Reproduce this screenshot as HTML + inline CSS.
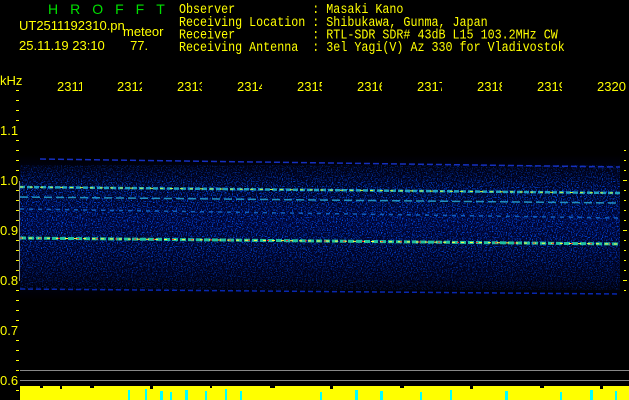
<!DOCTYPE html>
<html><head><meta charset="utf-8"><style>
html,body{margin:0;padding:0;background:#000;width:629px;height:400px;overflow:hidden;position:relative}
.t{position:absolute;font-family:"Liberation Mono",monospace;font-size:11.7px;color:#ffff00;white-space:pre;line-height:11px;transform-origin:0 0;transform:scaleY(1.15)}
.s{position:absolute;font-family:"Liberation Sans",sans-serif;color:#ffff00;font-size:13px;white-space:pre;line-height:13px}
.f{position:absolute;top:80px;width:25px;overflow:hidden;font-family:"Liberation Sans",sans-serif;font-size:13px;color:#ff0;line-height:13px}
</style></head><body>
<div class="s" style="left:48px;top:3px;color:#00e000;font-size:14px;letter-spacing:12px">HROFFT</div>
<div class="s" style="left:19px;top:19px">UT2511192310.pn</div>
<div class="s" style="left:123px;top:25px">meteor</div>
<div class="s" style="left:19px;top:39px">25.11.19 23:10       77.</div>
<div class="t" style="left:179px;top:4px">Observer           : Masaki Kano
Receiving Location : Shibukawa, Gunma, Japan
Receiver           : RTL-SDR SDR# 43dB L15 103.2MHz CW
Receiving Antenna  : 3el Yagi(V) Az 330 for Vladivostok</div>
<div class="s" style="left:0;top:74px">kHz</div>
<div class="f" style="left:57px">2311</div>
<div class="f" style="left:117px">2312</div>
<div class="f" style="left:177px">2313</div>
<div class="f" style="left:237px">2314</div>
<div class="f" style="left:297px">2315</div>
<div class="f" style="left:357px">2316</div>
<div class="f" style="left:417px">2317</div>
<div class="f" style="left:477px">2318</div>
<div class="f" style="left:537px">2319</div>
<div class="f" style="left:597px;width:30px">2320</div>
<div class="s" style="left:0;top:124px">1.1</div>
<div class="s" style="left:0;top:174px">1.0</div>
<div class="s" style="left:0;top:224px">0.9</div>
<div class="s" style="left:0;top:274px">0.8</div>
<div class="s" style="left:0;top:324px">0.7</div>
<div class="s" style="left:0;top:374px">0.6</div>
<svg width="629" height="400" style="position:absolute;left:0;top:0">
<defs>
<filter id="n" x="0" y="0" width="100%" height="100%">
<feTurbulence type="fractalNoise" baseFrequency="0.8" numOctaves="2" seed="3"/>
<feColorMatrix values="0 0 0 0 0  0.4 0 0 0 -0.2  4 0 0 0 -1.8  5 0 0 0 -2.4"/>
</filter>
<linearGradient id="g" x1="0" y1="0" x2="0" y2="1">
<stop offset="0" stop-color="#000"/><stop offset="0.1" stop-color="#000214"/>
<stop offset="0.45" stop-color="#000530"/><stop offset="0.85" stop-color="#000218"/><stop offset="1" stop-color="#000"/>
</linearGradient>
<linearGradient id="mg" x1="0" y1="0" x2="0" y2="1">
<stop offset="0" stop-color="#fff" stop-opacity="0.35"/><stop offset="0.2" stop-color="#fff" stop-opacity="0.9"/>
<stop offset="0.65" stop-color="#fff" stop-opacity="0.8"/><stop offset="1" stop-color="#fff" stop-opacity="0.3"/>
</linearGradient>
<mask id="m"><rect x="20" y="165" width="600" height="125" fill="url(#mg)"/></mask>
</defs>
<g fill="#ff0">
<rect x="16" y="90" width="3" height="1"/><rect x="16" y="100" width="3" height="1"/><rect x="16" y="110" width="3" height="1"/><rect x="16" y="120" width="3" height="1"/><rect x="16" y="140" width="3" height="1"/><rect x="16" y="150" width="3" height="1"/><rect x="16" y="160" width="3" height="1"/><rect x="16" y="170" width="3" height="1"/><rect x="16" y="190" width="3" height="1"/><rect x="16" y="200" width="3" height="1"/><rect x="16" y="210" width="3" height="1"/><rect x="16" y="220" width="3" height="1"/><rect x="16" y="240" width="3" height="1"/><rect x="16" y="250" width="3" height="1"/><rect x="16" y="260" width="3" height="1"/><rect x="16" y="270" width="3" height="1"/><rect x="16" y="290" width="3" height="1"/><rect x="16" y="300" width="3" height="1"/><rect x="16" y="310" width="3" height="1"/><rect x="16" y="320" width="3" height="1"/><rect x="16" y="340" width="3" height="1"/><rect x="16" y="350" width="3" height="1"/><rect x="16" y="360" width="3" height="1"/><rect x="16" y="370" width="3" height="1"/><rect x="16" y="390" width="3" height="1"/>
</g>
<g fill="#ff0">
<rect x="624" y="150" width="2" height="1"/><rect x="624" y="160" width="2" height="1"/><rect x="623" y="180" width="4" height="1"/><rect x="624" y="170" width="2" height="1"/><rect x="624" y="190" width="2" height="1"/><rect x="624" y="200" width="2" height="1"/><rect x="624" y="210" width="2" height="1"/><rect x="624" y="220" width="2" height="1"/><rect x="623" y="230" width="4" height="1"/><rect x="624" y="240" width="2" height="1"/><rect x="624" y="250" width="2" height="1"/><rect x="624" y="260" width="2" height="1"/><rect x="624" y="270" width="2" height="1"/><rect x="623" y="280" width="4" height="1"/><rect x="624" y="290" width="2" height="1"/>
</g>
<rect x="20" y="155" width="600" height="145" fill="url(#g)"/>
<g mask="url(#m)"><rect x="20" y="165" width="600" height="125" filter="url(#n)"/></g>
<g stroke-width="2" fill="none">
<line x1="40" y1="159" x2="620" y2="167" stroke="#1530c0" stroke-width="1.5" stroke-dasharray="6 3"/>
<line x1="20" y1="187" x2="620" y2="193" stroke="#20a0c0" stroke-width="2.5" stroke-dasharray="5 2"/>
<line x1="20" y1="187" x2="620" y2="193" stroke="#c0ff40" stroke-width="1" stroke-dasharray="3 7"/>
<line x1="20" y1="197" x2="620" y2="203" stroke="#2090c0" stroke-width="1.5" stroke-dasharray="8 4"/>
<line x1="20" y1="209" x2="620" y2="218" stroke="#1060c0" stroke-width="1.5" stroke-dasharray="4 5"/>
<line x1="20" y1="238" x2="620" y2="244" stroke="#20c0a0" stroke-width="3" stroke-dasharray="6 2"/>
<line x1="20" y1="238" x2="620" y2="244" stroke="#ffff40" stroke-width="1" stroke-dasharray="3 6"/>
<line x1="20" y1="238" x2="620" y2="244" stroke="#ff3020" stroke-width="1" stroke-dasharray="2 17"/>
<line x1="20" y1="289" x2="620" y2="294" stroke="#0828b0" stroke-width="1.5" stroke-dasharray="5 3"/>
</g>
<line x1="19.5" y1="181" x2="19.5" y2="281" stroke="#888"/>
<line x1="20" y1="370.5" x2="629" y2="370.5" stroke="#888"/>
<line x1="20" y1="380.5" x2="629" y2="380.5" stroke="#888"/>
<rect x="20" y="386" width="609" height="14" fill="#ffff00"/>
<g fill="#000">
<rect x="40" y="386" width="3" height="2"/><rect x="60" y="386" width="2" height="3"/><rect x="90" y="386" width="4" height="2"/><rect x="150" y="386" width="3" height="3"/><rect x="210" y="386" width="2" height="2"/><rect x="270" y="386" width="5" height="2"/><rect x="330" y="386" width="3" height="3"/><rect x="400" y="386" width="4" height="2"/><rect x="470" y="386" width="3" height="3"/><rect x="540" y="386" width="4" height="2"/><rect x="600" y="386" width="3" height="3"/>
</g>
<g fill="#00ffff">
<rect x="128" y="390" width="2" height="10"/><rect x="145" y="389" width="2" height="11"/><rect x="160" y="391" width="3" height="9"/><rect x="170" y="392" width="2" height="8"/><rect x="185" y="390" width="3" height="10"/><rect x="205" y="391" width="2" height="9"/><rect x="225" y="389" width="2" height="11"/><rect x="240" y="391" width="2" height="9"/><rect x="320" y="392" width="2" height="8"/><rect x="355" y="390" width="3" height="10"/><rect x="380" y="391" width="3" height="9"/><rect x="420" y="392" width="2" height="8"/><rect x="450" y="390" width="2" height="10"/><rect x="505" y="391" width="3" height="9"/><rect x="560" y="392" width="2" height="8"/><rect x="590" y="390" width="3" height="10"/><rect x="615" y="391" width="2" height="9"/>
</g>
</svg>
</body></html>
